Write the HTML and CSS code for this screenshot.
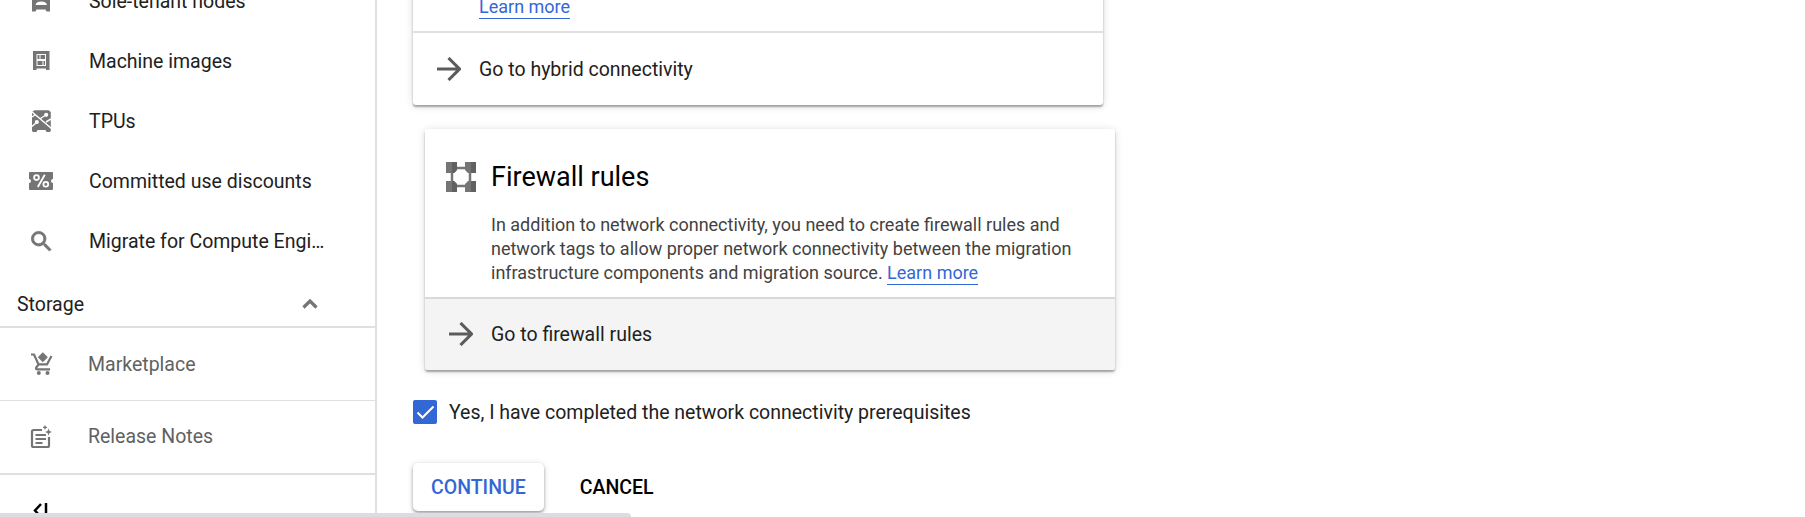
FILE: index.html
```html
<!DOCTYPE html>
<html lang="en">
<head>
<meta charset="utf-8">
<title>Compute Engine</title>
<link rel="stylesheet" href="styles.css">
</head>
<body>
<div class="app">
  <nav class="sidebar">
    <div class="nav-list">
      <a class="nav-item"><svg class="icon" viewBox="0 0 24 24"><path fill-rule="evenodd" d="M4.500 2h15a1.500 1.500 0 0 1 1.500 1.500V22.500h-3.500l-1-2h-9l-1 2H3V3.500A1.500 1.500 0 0 1 4.500 2zM6.500 16h11.500c-.8-2.800-2.500-3.600-5.800-3.600S7.300 13.200 6.500 16z"/></svg><span class="nav-label">Sole-tenant nodes</span></a>
      <a class="nav-item"><svg class="icon" viewBox="0 0 24 24"><path fill-rule="evenodd" d="M4 2h16.500v19H17v-1.500H7.500V21H4zM7.500 5v12h9.500V5z"/><path d="M8.500 6h2v4h-2zM11.500 6H16v4h-4.500zM8.500 12h5v4h-5zM14.500 12H16v4h-1.500z"/></svg><span class="nav-label">Machine images</span></a>
      <a class="nav-item"><svg class="icon" viewBox="0 0 24 24"><path d="M5.500 1.200h14L21.800 3v19l-1 1H17.500l-1-2h-8l-1 2H4l-1-1V3z"/><path class="cut-line" d="M2.500 2.500L22.500 19.500M11.500 9.500l4.500-3M3 8l3.500-2.500M3 17.500l4.500-4M17 13l5-3"/><circle class="cut" cx="7.800" cy="13" r="2.100"/><circle class="cut" cx="17.200" cy="5.800" r="2.100"/></svg><span class="nav-label">TPUs</span></a>
      <a class="nav-item"><svg class="icon icon-wide" viewBox="0 0 26 24"><path d="M2 3h22q1 0 1 1v6a2 2 0 0 0 0 4V20q0 1-1 1H2q-1 0-1-1v-6a2 2 0 0 0 0-4V4q0-1 1-1z"/><g class="percent"><circle cx="8.500" cy="8.600" r="2.400"/><circle cx="17.800" cy="15.200" r="2.400"/><path d="M16.800 5.800l-7 12.200"/></g></svg><span class="nav-label">Committed use discounts</span></a>
      <a class="nav-item"><svg class="icon icon-search" viewBox="0 0 24 24"><path d="M15.500 14h-.79l-.28-.27A6.470 6.470 0 0 0 16 9.500 6.500 6.500 0 1 0 9.500 16c1.610 0 3.090-.59 4.230-1.570l.27.28v.79l5 4.990L20.490 19zm-6 0A4.500 4.500 0 1 1 14 9.500 4.500 4.500 0 0 1 9.500 14z"/></svg><span class="nav-label">Migrate for Compute Engi…</span></a>
    </div>
    <div class="nav-section"><span>Storage</span><svg class="chevron" viewBox="0 0 16 10"><path d="M1.500 8.500L8 2l6.500 6.500"/></svg></div>
    <div class="nav-footer">
      <a class="foot-item"><svg class="icon" viewBox="0 0 24 24"><path d="M13.800 .3L18.800 5.300l-5 5-5-5z"/><path class="stroke" d="M2 2.500h3l4.500 9.800h8.500L22.500 4M9.500 12.500L7.200 15.500q-.6 1.800 1 1.800H21"/><circle cx="9.800" cy="21" r="2"/><circle cx="18.500" cy="21" r="2"/></svg><span>Marketplace</span></a>
      <a class="foot-item"><svg class="icon" viewBox="0 0 24 24"><path class="stroke" d="M13 5H4.500Q3 5 3 6.500v14Q3 22 4.500 22h14q1.500 0 1.500-1.500V12"/><path class="stroke" d="M6.500 10H17M6.500 14H17M6.500 18h7"/><path d="M19.500 3.500l1 2.500 2.500 1-2.500 1-1 2.500-1-2.500-2.500-1 2.500-1zM16 0l.8 1.600 1.600.8-1.600.8-.8 1.600-.8-1.600-1.600-.8 1.600-.8z"/></svg><span>Release Notes</span></a>
      <a class="collapse"><svg class="collapse-icon" viewBox="0 0 16 16"><path d="M8 1L2 7.500 8 14M13 0v15"/></svg></a>
    </div>
  </nav>
  <main class="content">
    <section class="card card-hybrid">
      <div class="card-body"><p class="card-text"><a class="link">Learn more</a></p></div>
      <a class="card-action"><svg class="arrow" viewBox="0 0 24 24"><path d="M0 12h22M11.500 1l11 11-11 11"/></svg><span>Go to hybrid connectivity</span></a>
    </section>
    <section class="card card-firewall">
      <div class="card-body">
        <div class="card-head">
          <svg class="fw-icon" viewBox="0 0 30 30"><path class="fw-line" d="M8 6h14M8 24h14M6 8v14M24 8v14"/><path d="M0 0h11v8l-3 3H0zM19 0h11v11h-8l-3-3zM0 19h8l3 3v8H0zM22 19h8v11H19v-8z"/><path class="fw-shade" d="M6 0h5v8l-3 3H6zM25 0h5v11h-5zM6 19h2l3 3v8H6zM25 19h5v11h-5z"/></svg>
          <h2 class="card-title">Firewall rules</h2>
        </div>
        <p class="card-text">In addition to network connectivity, you need to create firewall rules and<br>network tags to allow proper network connectivity between the migration<br>infrastructure components and migration source. <a class="link">Learn more</a></p>
      </div>
      <a class="card-action active"><svg class="arrow" viewBox="0 0 24 24"><path d="M0 12h22M11.500 1l11 11-11 11"/></svg><span>Go to firewall rules</span></a>
    </section>
    <label class="confirm"><span class="checkbox"><svg viewBox="0 0 24 24"><path d="M4.500 12.500l5 5L20.500 6.500"/></svg></span><span>Yes, I have completed the network connectivity prerequisites</span></label>
    <div class="buttons"><button class="btn btn-raised">CONTINUE</button><button class="btn">CANCEL</button></div>
  </main>
  <div class="status-bar"></div>
</div>
</body>
</html>
```
FILE: styles.css
```css
* { box-sizing: border-box; }
body { margin: 0; overflow: hidden; background: #fff; color: #212121; font-family: Roboto, sans-serif; font-size: 19.5px; }
.app { position: relative; display: flex; height: 517px; overflow: hidden; }
.sidebar { flex: none; width: 377px; height: 517px; border-right: 2px solid #e0e0e0; overflow: hidden; }
.nav-list { margin-top: -29px; }
.nav-item { display: flex; align-items: center; height: 60px; padding-left: 29px; }
.icon { flex: none; width: 24px; height: 24px; fill: #757575; }
.icon-wide { width: 26px; margin-left: -1px; margin-right: -1px; }
.icon-search { width: 27px; height: 27px; margin-left: -1px; margin-right: -2px; stroke: #757575; stroke-width: .7; }
.nav-label { margin-left: 36px; white-space: nowrap; }
.cut { fill: #fff; }
.cut-line { fill: none; stroke: #fff; stroke-width: 1.5; }
.percent { fill: none; stroke: #fff; stroke-width: 1.8; }
.stroke { fill: none; stroke: #757575; stroke-width: 2.2; }
.nav-section { display: flex; align-items: center; justify-content: space-between; height: 55px; padding: 11px 57px 0 17px; }
.chevron { width: 16px; height: 10px; fill: none; stroke: #757575; stroke-width: 3.2; }
.nav-footer { border-top: 2px solid #e0e0e0; color: #616161; }
.foot-item { display: flex; align-items: center; gap: 35px; height: 73px; padding-left: 29px; border-bottom: 1px solid #e0e0e0; }
.foot-item + .foot-item { border-bottom-width: 2px; height: 74px; padding-bottom: 2px; }
.foot-item + .foot-item .icon { margin-top: 2px; }
.collapse { display: flex; padding: 28px 0 0 33px; }
.collapse-icon { width: 16px; height: 16px; fill: none; stroke: #000; stroke-width: 2.500; }
.content { padding-left: 36px; }
.card { width: 690px; border-radius: 3px; background: #fff; overflow: hidden; box-shadow: 0 2px 2px rgba(0,0,0,.32), 0 1px 9px rgba(0,0,0,.14); }
.card-hybrid { margin-top: -40px; height: 145px; }
.card-hybrid .card-body { height: 71px; padding: 35px 0 0 66px; }
.card-firewall { margin: 24px 0 0 12px; height: 241px; }
.card-firewall .card-body { height: 168px; padding: 33px 0 0 21px; }
.card-head { display: flex; align-items: center; gap: 15px; height: 30px; }
.fw-icon { width: 30px; height: 30px; fill: #757575; }
.fw-line { stroke: #757575; stroke-width: 2.500; }
.fw-shade { fill: #616161; }
.card-title { margin: 0; font-size: 27px; font-weight: 400; color: #000; }
.card-text { margin: 0; font-size: 18px; line-height: 24px; color: #424242; }
.card-firewall .card-text { margin: 21px 0 0 45px; white-space: nowrap; }
.link { color: #3367d6; border-bottom: 1px solid #3367d6; padding-bottom: 1px; }
.card-action { display: flex; align-items: center; gap: 18px; height: 74px; padding-left: 24px; border-top: 2px solid #e0e0e0; }
.active { height: 73px; padding-bottom: 1px; border-top-color: #d9d9d9; background: #f4f4f4; }
.arrow { width: 24px; height: 24px; fill: none; stroke: #5c5c5c; stroke-width: 3.1; }
.confirm { display: flex; align-items: center; gap: 12px; height: 24px; margin-top: 30px; }
.checkbox { width: 24px; height: 24px; border-radius: 2px; background: #3367d6; }
.checkbox svg { display: block; width: 24px; height: 24px; fill: none; stroke: #fff; stroke-width: 2; }
.buttons { display: flex; gap: 18px; margin-top: 39px; }
.btn { height: 48px; padding: 0 18px; border: 0; border-radius: 5px; background: #fff; color: #000; font: 500 19.5px Roboto, sans-serif; }
.btn-raised { color: #3367d6; box-shadow: 0 2px 3px rgba(0,0,0,.3), 0 1px 6px rgba(0,0,0,.16); }
.status-bar { position: absolute; left: 0; bottom: 0; width: 631px; height: 4px; border-top-right-radius: 5px; background: #dadde2; }
```
